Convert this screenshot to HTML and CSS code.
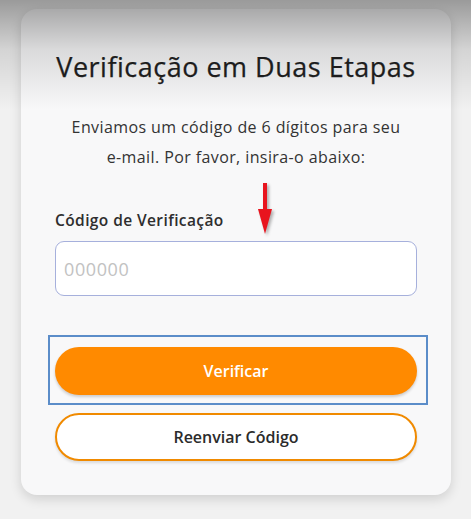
FILE: index.html
```html
<!DOCTYPE html>
<html lang="pt">
<head>
<meta charset="utf-8">
<title>Verificação em Duas Etapas</title>
<link rel="stylesheet" href="styles.css">
</head>
<body>
<div class="page">
  <div class="card">
    <h1 class="title">Verificação em Duas Etapas</h1>
    <p class="subtitle">Enviamos um código de 6 dígitos para seu<br>e-mail. Por favor, insira-o abaixo:</p>
    <div class="field">
      <label class="label" for="code">Código de Verificação</label>
      <svg class="arrow" width="16" height="52" viewBox="0 0 16 52" aria-hidden="true">
        <rect x="6" y="0" width="4" height="28" fill="#e8141e"/>
        <polygon points="1,26 15,26 8,51" fill="#e8141e"/>
      </svg>
      <input class="input" id="code" type="text" placeholder="000000">
    </div>
    <div class="actions">
      <div class="highlight">
        <button class="btn btn-primary" type="button">Verificar</button>
      </div>
      <button class="btn btn-outline" type="button">Reenviar Código</button>
    </div>
  </div>
  <div class="shade"></div>
</div>
</body>
</html>
```
FILE: styles.css
```css
html, body {
  margin: 0;
  padding: 0;
  background: #f1f1f1;
}
body {
  font-family: "Open Sans", Lato, sans-serif;
  color: #2b2b2b;
}
.page {
  position: relative;
  width: 471px;
  height: 519px;
  padding: 9px 20px 0 21px;
  box-sizing: border-box;
  overflow: hidden;
}
.shade {
  position: absolute;
  left: 0;
  top: 0;
  right: 0;
  height: 110px;
  background: linear-gradient(rgba(0,0,0,0.36), rgba(0,0,0,0.12) 45%, rgba(0,0,0,0));
  pointer-events: none;
}
.card {
  width: 430px;
  height: 486px;
  box-sizing: border-box;
  background: #f8f8f9;
  border-radius: 16px;
  box-shadow: 0 4px 12px rgba(0,0,0,0.14);
  padding: 40px 34px 0 34px;
  display: flex;
  flex-direction: column;
}
.title {
  margin: 0 -20px;
  text-align: center;
  font-size: 27px;
  line-height: 36px;
  font-weight: 500;
  color: #1f1f1f;
  letter-spacing: 0.5px;
  white-space: nowrap;
  -webkit-text-stroke: 0.25px #1f1f1f;
}
.subtitle {
  margin: 27px -20px 0;
  text-align: center;
  font-size: 16px;
  line-height: 30px;
  color: #333;
  letter-spacing: 0.4px;
  white-space: nowrap;
}
.field {
  position: relative;
  margin-top: 38px;
  display: flex;
  flex-direction: column;
}
.label {
  font-size: 15.5px;
  font-weight: 600;
  line-height: 20px;
  color: #2e2e2e;
  letter-spacing: 0.4px;
}
.arrow {
  position: absolute;
  left: 202px;
  top: -27px;
  filter: drop-shadow(2px 2px 1.5px rgba(0,0,0,0.3));
}
.input {
  margin-top: 11px;
  height: 55px;
  box-sizing: border-box;
  border: 1.5px solid #a6b0dc;
  border-radius: 9px;
  background: #fff;
  padding: 0 8px;
  font-family: inherit;
  font-size: 18px;
  letter-spacing: 0.6px;
  color: #333;
  outline: none;
}
.input::placeholder {
  color: #c2c2c2;
}
.actions {
  margin-top: 39px;
  margin-left: -7px;
  margin-right: -11px;
  display: flex;
  flex-direction: column;
  gap: 8px;
}
.highlight {
  border: 2px solid #5b8dc9;
  padding: 10px 9px 8px 5px;
}
.btn {
  display: block;
  width: 100%;
  height: 48px;
  box-sizing: border-box;
  border-radius: 24px;
  font-family: inherit;
  font-size: 16px;
  cursor: pointer;
}
.btn-primary {
  border: none;
  background: #ff8a00;
  color: #fff;
  font-weight: 600;
  box-shadow: 0 2px 3px rgba(0,0,0,0.18);
}
.btn-outline {
  margin-left: 7px;
  width: 362px;
  border: 2px solid #f08a00;
  background: #fff;
  color: #2b2b2b;
  font-weight: 600;
  box-shadow: 0 2px 3px rgba(0,0,0,0.12);
}
```
